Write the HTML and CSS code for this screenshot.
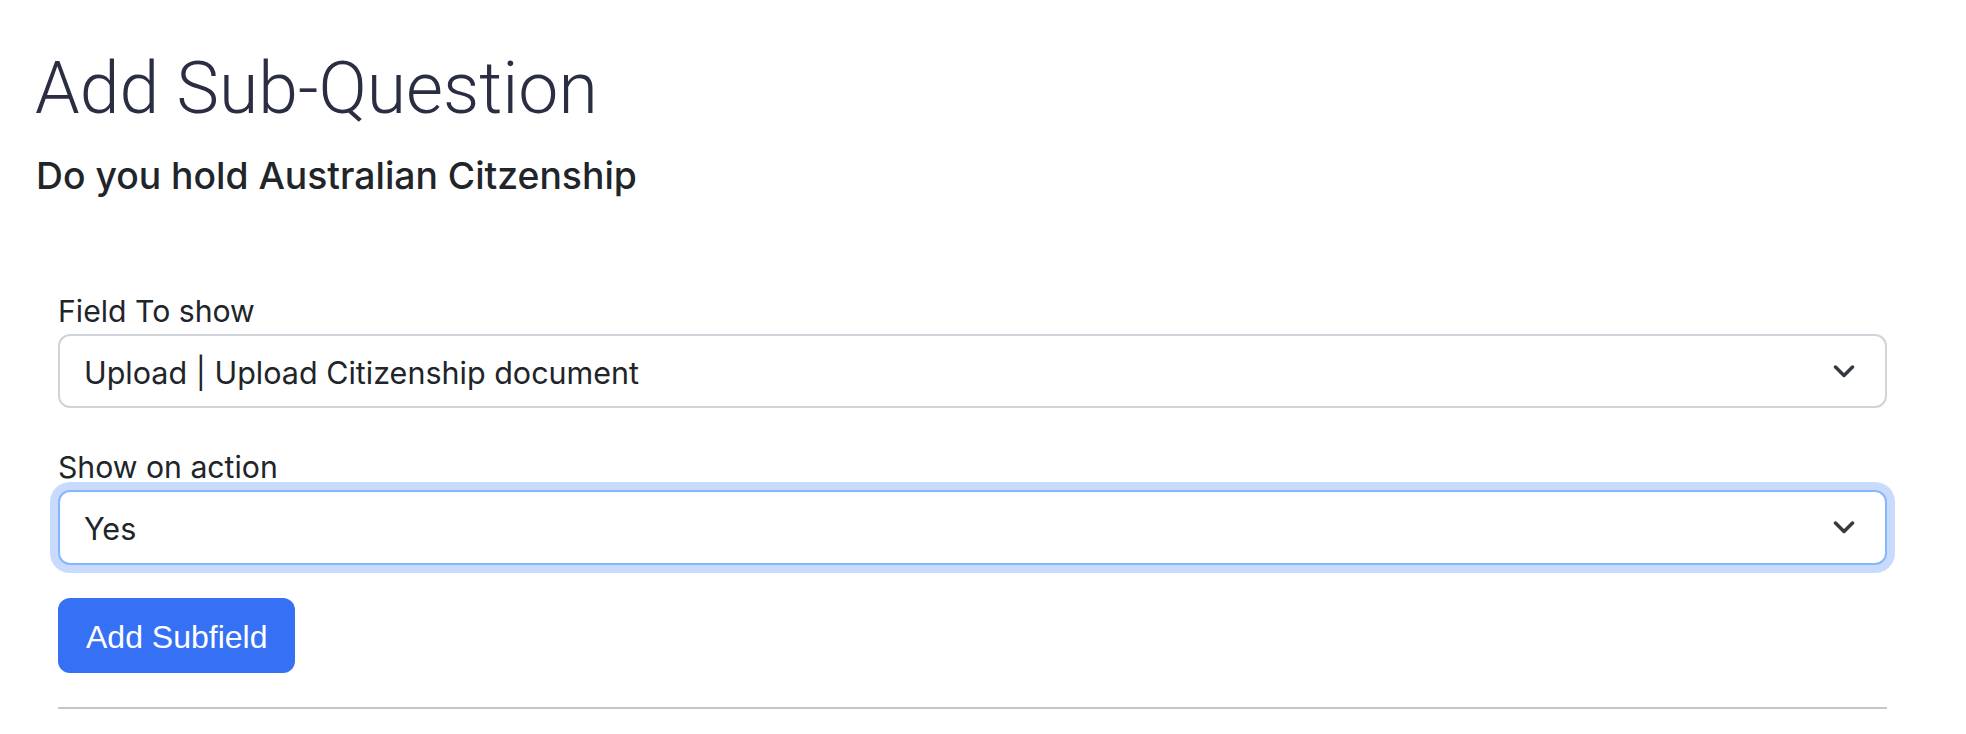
FILE: index.html
```html
<!DOCTYPE html>
<html lang="en">
<head>
<meta charset="utf-8">
<title>Add Sub-Question</title>
<link rel="stylesheet" href="styles.css">
</head>
<body>
<div class="page">
  <h1 class="title">Add Sub-Question</h1>
  <h2 class="question">Do you hold Australian Citzenship</h2>
  <form class="form">
    <div class="field">
      <label class="label">Field To show</label>
      <div class="select">
        <span class="select-text">Upload | Upload Citizenship document</span>
        <svg class="chevron" width="22" height="13" viewBox="0 0 22 13"><path d="M2.5 2 L11 10.5 L19.5 2" fill="none" stroke="#343a40" stroke-width="3.5" stroke-linecap="round" stroke-linejoin="round"/></svg>
      </div>
    </div>
    <div class="field field-second">
      <label class="label">Show on action</label>
      <div class="select select-focus">
        <span class="select-text">Yes</span>
        <svg class="chevron" width="22" height="13" viewBox="0 0 22 13"><path d="M2.5 2 L11 10.5 L19.5 2" fill="none" stroke="#343a40" stroke-width="3.5" stroke-linecap="round" stroke-linejoin="round"/></svg>
      </div>
    </div>
    <button type="button" class="btn">Add Subfield</button>
    <hr class="rule">
  </form>
</div>
</body>
</html>
```
FILE: styles.css
```css
html, body {
  margin: 0;
  padding: 0;
  background: #ffffff;
}

body {
  font-family: Inter, "Noto Sans", "Liberation Sans", sans-serif;
  color: #212529;
}

.page {
  padding: 45px 79px 0 35px;
}

.title {
  margin: 0;
  font-family: Roboto, "Liberation Sans", sans-serif;
  font-weight: 300;
  font-size: 71.5px;
  line-height: 88px;
  color: #2b2e43;
}

.question {
  margin: 21px 0 0 1px;
  font-weight: 500;
  font-size: 37.3px;
  line-height: 44px;
  color: #212529;
}

.form {
  margin: 92px 0 0 23px;
}

.label {
  display: block;
  font-size: 30.2px;
  line-height: 42px;
  margin-bottom: 2px;
}

.field-second {
  margin-top: 38px;
}

.select {
  box-sizing: border-box;
  height: 74px;
  border: 2px solid #ced4da;
  border-radius: 12px;
  padding: 2px 30px 0 24px;
  display: flex;
  align-items: center;
  justify-content: space-between;
  background: #fff;
}

.select-text {
  font-size: 30.5px;
  line-height: 45px;
  color: #212529;
}

.select-focus {
  height: 75px;
  border-color: #86b7fe;
  box-shadow: 0 0 0 8px #c9dbfc;
}

.chevron {
  display: block;
  margin-top: -2px;
}

.btn {
  display: block;
  margin-top: 33px;
  height: 75px;
  padding: 3px 28px 0;
  border: none;
  border-radius: 12px;
  background: #3570f5;
  color: #ffffff;
  font-family: "Liberation Sans", Arial, sans-serif;
  font-size: 32px;
  cursor: pointer;
}

.rule {
  margin: 34px 0 0;
  border: none;
  border-top: 2px solid #c6c6c6;
  height: 0;
}
```
